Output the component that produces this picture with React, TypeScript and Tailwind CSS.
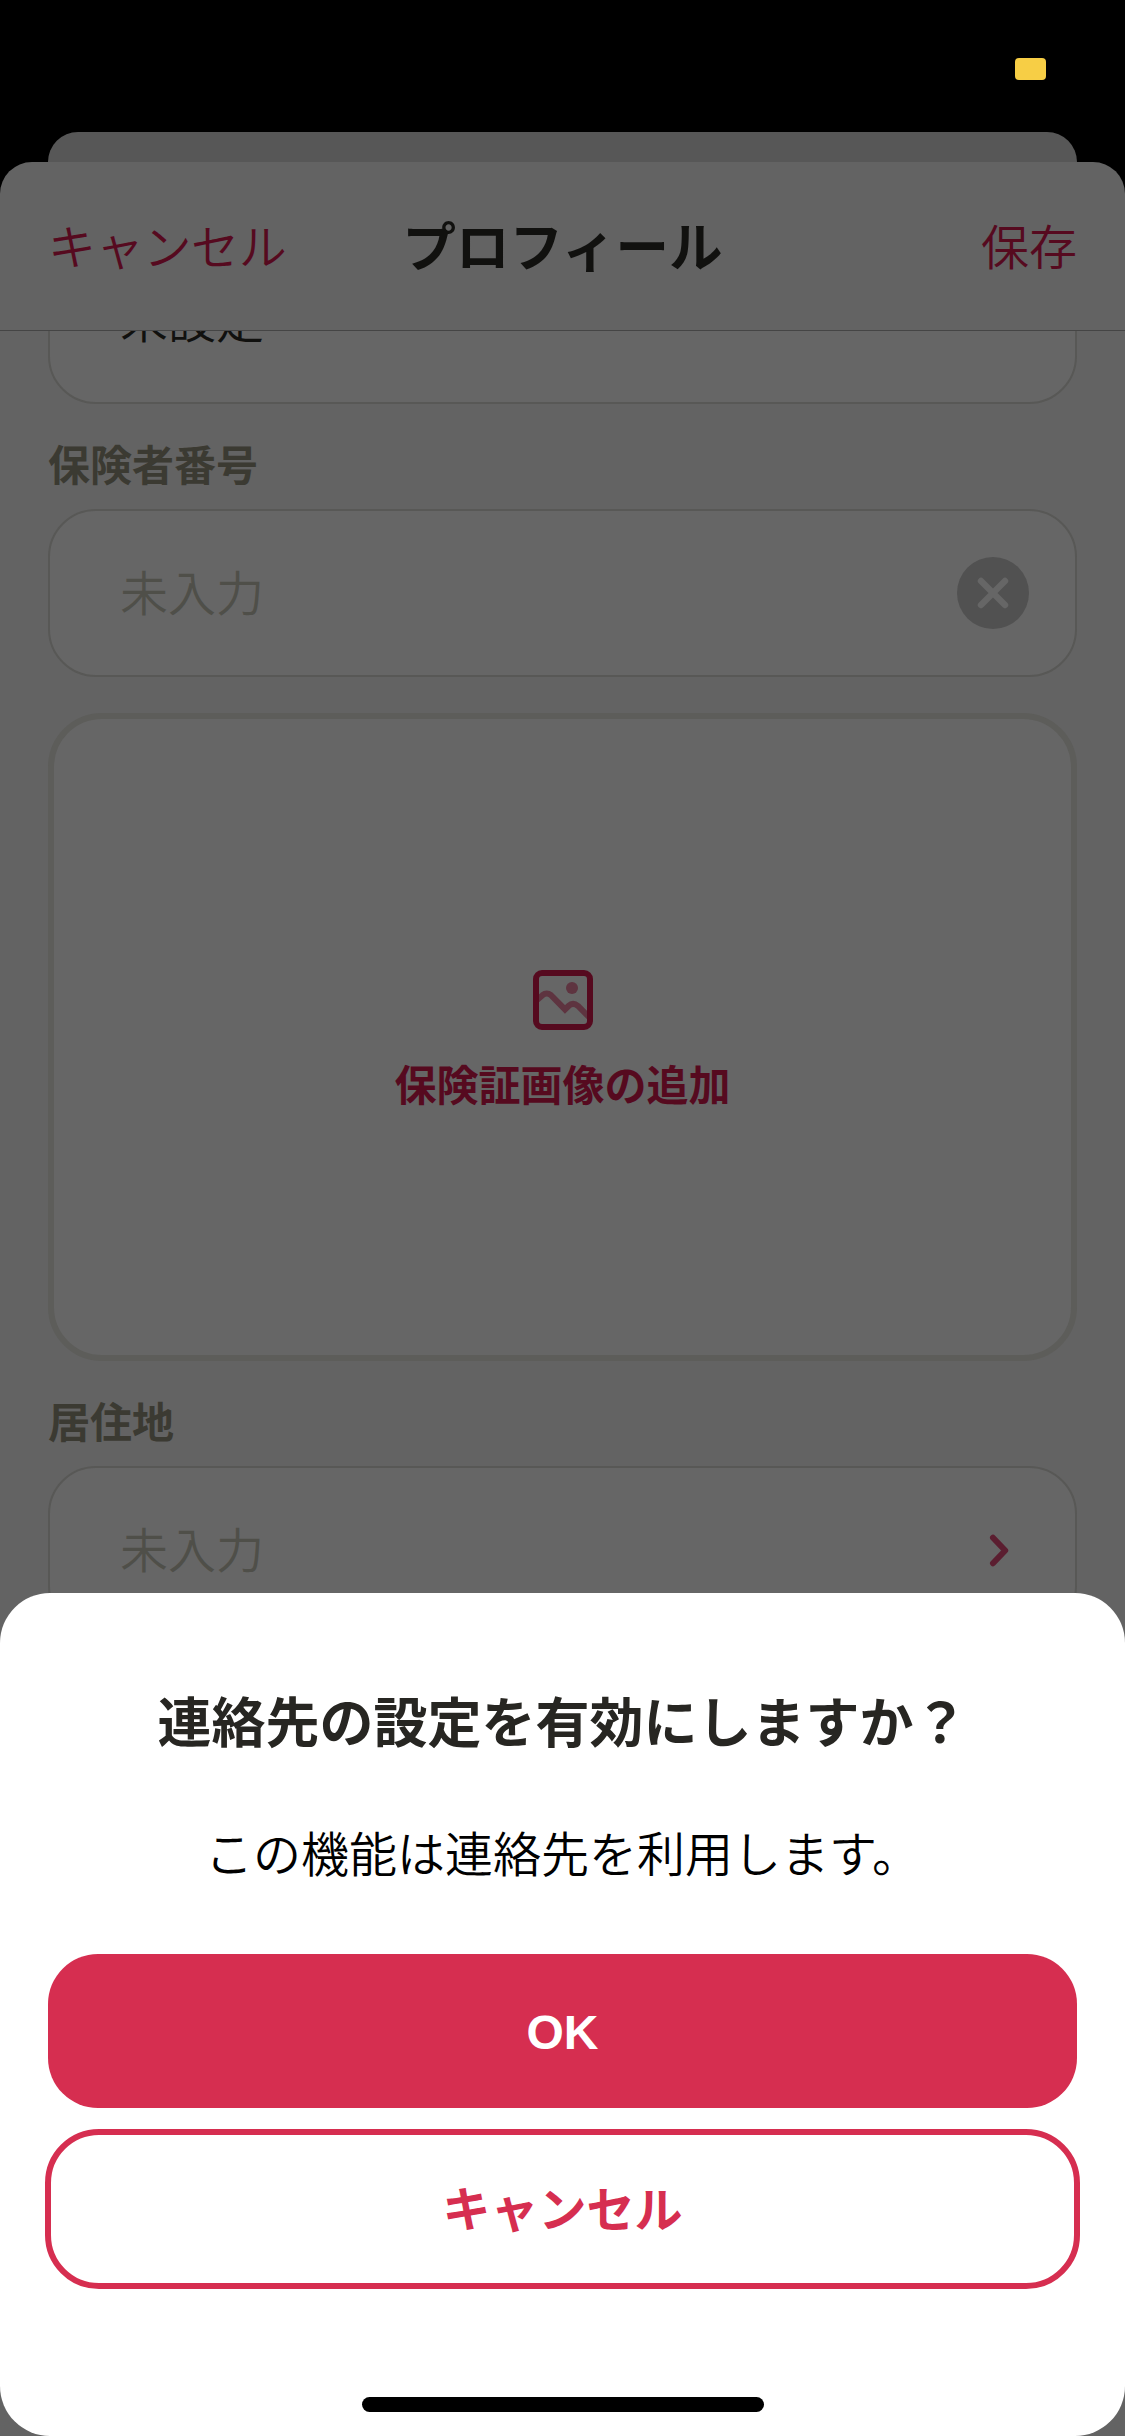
import type { ReactNode } from "react";

function Label({ children }: { children: ReactNode }) {
  return (
    <div className="h-[105px] pt-[28px] text-[42px] font-bold leading-[62px] text-[#3b3a32]">
      {children}
    </div>
  );
}

function Field({ children }: { children: ReactNode }) {
  return (
    <div className="flex h-[168px] items-center justify-between rounded-[48px] border-2 border-[#585856] bg-[#666666] pl-[70px] text-[48px] font-[350] leading-[72px]">
      {children}
    </div>
  );
}

function ClearIcon() {
  return (
    <svg className="mr-[46px] size-[72px]" viewBox="0 0 72 72" fill="none">
      <circle cx="36" cy="36" r="36" fill="#515151" />
      <path d="M24 24L48 48M48 24L24 48" stroke="#666666" strokeWidth="6.4" strokeLinecap="round" />
    </svg>
  );
}

function ChevronIcon() {
  return (
    <svg className="mr-[64px] h-[34px] w-[22px]" viewBox="0 0 22 34" fill="none">
      <path d="M4 4.7L16.2 17.5L4 30.3" stroke="#5b1e30" strokeWidth="6" strokeLinecap="round" strokeLinejoin="round" />
    </svg>
  );
}

function PictureIcon() {
  return (
    <svg className="size-[60px]" viewBox="0 0 60 60" fill="none">
      <circle cx="39" cy="18" r="6" fill="#5e3440" />
      <path
        d="M4 30L9.5 25.2Q13.7 21.8 18 25.2L32 39.4L35.5 36Q40 31.6 45 36L56 47"
        stroke="#5e3440"
        strokeWidth="6"
      />
      <rect x="3" y="3" width="54" height="54" rx="6" stroke="#560a1f" strokeWidth="6" />
    </svg>
  );
}

export default function App() {
  return (
    <div
      lang="ja"
      className="relative flex h-[2436px] w-[1125px] flex-col overflow-hidden bg-black font-['Noto_Sans_CJK_JP',sans-serif]"
    >
      <div className="flex h-[132px] shrink-0 justify-end pr-[79px] pt-[58px]">
        <div className="h-[22px] w-[31px] rounded-[4px] bg-[#f7ce45]" />
      </div>
      <div className="mx-[48px] h-[30px] shrink-0 rounded-t-[30px] bg-[#575757]" />

      <div className="flex flex-1 flex-col overflow-hidden rounded-t-[32px] bg-[#636363]">
        <header className="grid h-[169px] shrink-0 grid-cols-[1fr_auto_1fr] items-center border-b border-[#454545] px-[48px] pb-[5px] text-[48px] leading-[72px] text-[#560a1f]">
          <span className="font-[350] tracking-[-0.3px]">キャンセル</span>
          <h1 className="text-[53.5px] font-bold text-[#11110f]">プロフィール</h1>
          <span className="text-right font-[350]">保存</span>
        </header>

        <main className="flex-1 overflow-hidden px-[48px]">
          <div className="-mt-[95px]">
            <Field>
              <span className="pb-[7px] text-[#11110f]">未設定</span>
            </Field>
          </div>
          <Label>保険者番号</Label>
          <Field>
            <span className="pb-[6px] text-[#4f4f49]">未入力</span>
            <ClearIcon />
          </Field>
          <div className="mt-[36px] flex h-[648px] flex-col items-center rounded-[54px] border-[6px] border-[#5d5d5a] bg-[#666666] pt-[251px]">
            <PictureIcon />
            <span className="mt-[22px] text-[42px] font-bold leading-[62px] text-[#560a1f]">
              保険証画像の追加
            </span>
          </div>
          <Label>居住地</Label>
          <Field>
            <span className="pb-[6px] text-[#4f4f49]">未入力</span>
            <ChevronIcon />
          </Field>
        </main>
      </div>

      <section className="absolute inset-x-0 bottom-0 flex h-[843px] flex-col items-center rounded-[50px] bg-white px-[45px] pt-[87px]">
        <h2 className="text-[54px] font-bold leading-[80px] text-[#272622]">
          連絡先の設定を有効にしますか？
        </h2>
        <p className="mt-[55px] text-[48px] font-[350] leading-[72px] text-black">
          この機能は連絡先を利用します。
        </p>
        <button className="mt-[67px] h-[154px] w-[1029px] shrink-0 rounded-[50px] bg-[#d62e50] pt-[3px] font-['Liberation_Sans',sans-serif] text-[48px] font-bold leading-[72px] text-white">
          OK
        </button>
        <button className="mt-[21px] h-[160px] w-full shrink-0 rounded-[54px] border-[6px] border-[#d62e50] pb-[6px] text-[48px] font-bold leading-[72px] text-[#d62e50]">
          キャンセル
        </button>
        <div className="mt-[108px] h-[15px] w-[402px] shrink-0 rounded-full bg-black" />
      </section>
    </div>
  );
}
